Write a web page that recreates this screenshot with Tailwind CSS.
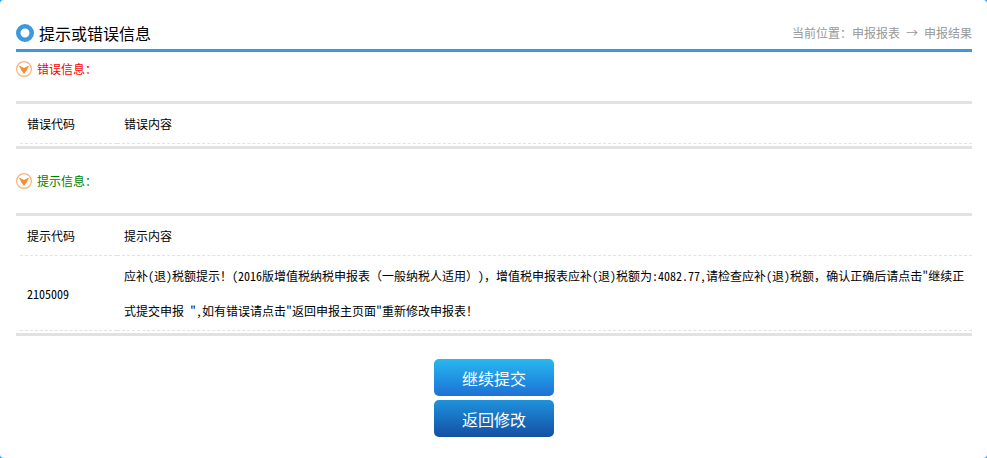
<!DOCTYPE html>
<html lang="zh-CN">
<head>
  <meta charset="UTF-8">
  <meta name="viewport" content="width=device-width, initial-scale=1.0">
  <title>提示或错误信息</title>
  <script src="https://cdn.jsdelivr.net/npm/@tailwindcss/browser@4"></script>
</head>
<body class="bg-[#2aa5f5] font-['Noto_Sans_CJK_SC',sans-serif] text-xs text-black [text-spacing-trim:space-all]">
  <main class="min-h-screen rounded-[4px] bg-white pt-4 pr-[15px] pl-4">

    <!-- 标题栏 -->
    <header class="flex h-9 items-center justify-between border-b-3 border-[#3d98e0]">
      <h1 class="flex items-center gap-[5px] text-base">
        <svg class="h-[18px] w-[18px]" viewBox="0 0 18 18" fill="none">
          <circle cx="9" cy="9" r="6.75" stroke="#3d98e0" stroke-width="4.5" />
        </svg>
        提示或错误信息
      </h1>
      <p class="text-[#999999] [font-feature-settings:'hwid']">当前位置：申报报表 → 申报结果</p>
    </header>

    <!-- 错误信息 -->
    <section>
      <h2 class="flex h-[49px] items-start gap-[5px] pt-[9px] leading-4 text-[#ff0000]">
        <svg class="h-4 w-4" viewBox="0 0 16 16" fill="none">
          <circle cx="8" cy="8" r="7.4" stroke="#fbb07a" stroke-width="1.2" />
          <path d="M2.8 4.4 L8 7 L13.2 4.4 L10.6 9.6 L8 13 L5.4 9.6 Z" fill="#fa8b35" />
        </svg>
        错误信息：
      </h2>
      <div class="border-y-3 border-[#e2e2e2] pb-[2px] pl-1">
        <table class="w-full table-fixed border-collapse text-left leading-[35px]">
          <thead>
            <tr class="border-b border-dashed border-[#e2e2e2]">
              <th class="w-[97px] py-[2px] pl-[7px] font-normal">错误代码</th>
              <th class="py-[2px] pl-[7px] font-normal">错误内容</th>
            </tr>
          </thead>
        </table>
      </div>
    </section>

    <!-- 提示信息 -->
    <section class="pt-4">
      <h2 class="flex h-12 items-start gap-[5px] pt-2 leading-4 text-[#008000]">
        <svg class="h-4 w-4" viewBox="0 0 16 16" fill="none">
          <circle cx="8" cy="8" r="7.4" stroke="#fbb07a" stroke-width="1.2" />
          <path d="M2.8 4.4 L8 7 L13.2 4.4 L10.6 9.6 L8 13 L5.4 9.6 Z" fill="#fa8b35" />
        </svg>
        提示信息：
      </h2>
      <div class="border-y-3 border-[#e2e2e2] pb-[2px] pl-1">
        <table class="w-full table-fixed border-collapse text-left leading-[35px]">
          <thead>
            <tr class="border-b border-dashed border-[#e2e2e2]">
              <th class="w-[97px] py-[2px] pl-[7px] font-normal">提示代码</th>
              <th class="py-[2px] pl-[7px] font-normal">提示内容</th>
            </tr>
          </thead>
          <tbody>
            <!-- 数字和英文标点用半角字形，中文标点保持全角 -->
            <tr class="border-b border-dashed border-[#e2e2e2] [font-feature-settings:'hwid']">
              <td class="py-[2px] pl-[7px]">2105009</td>
              <td class="py-[2px] pl-[7px] break-all">应补(退)税额提示<span class="[font-feature-settings:normal]">！</span>(2016版增值税纳税申报表<span class="[font-feature-settings:normal]">（一般纳税人适用）</span>)<span class="[font-feature-settings:normal]">，</span>增值税申报表应补(退)税额为:4082.77,请检查应补(退)税额<span class="[font-feature-settings:normal]">，</span>确认正确后请点击"继续正<wbr>式提交申报 ",如有错误请点击"返回申报主页面"重新修改申报表<span class="[font-feature-settings:normal]">！</span></td>
            </tr>
          </tbody>
        </table>
      </div>
    </section>

    <!-- 操作按钮 -->
    <div class="flex flex-col items-center gap-1 pt-[23px] pb-5 text-base text-white">
      <button type="button" class="h-[37px] w-[120px] rounded-[5px] bg-linear-to-b from-[#29b8f0] to-[#1f70d4]">继续提交</button>
      <button type="button" class="h-[37px] w-[120px] rounded-[5px] bg-linear-to-b from-[#1f92dc] to-[#154fa5]">返回修改</button>
    </div>

  </main>
</body>
</html>
